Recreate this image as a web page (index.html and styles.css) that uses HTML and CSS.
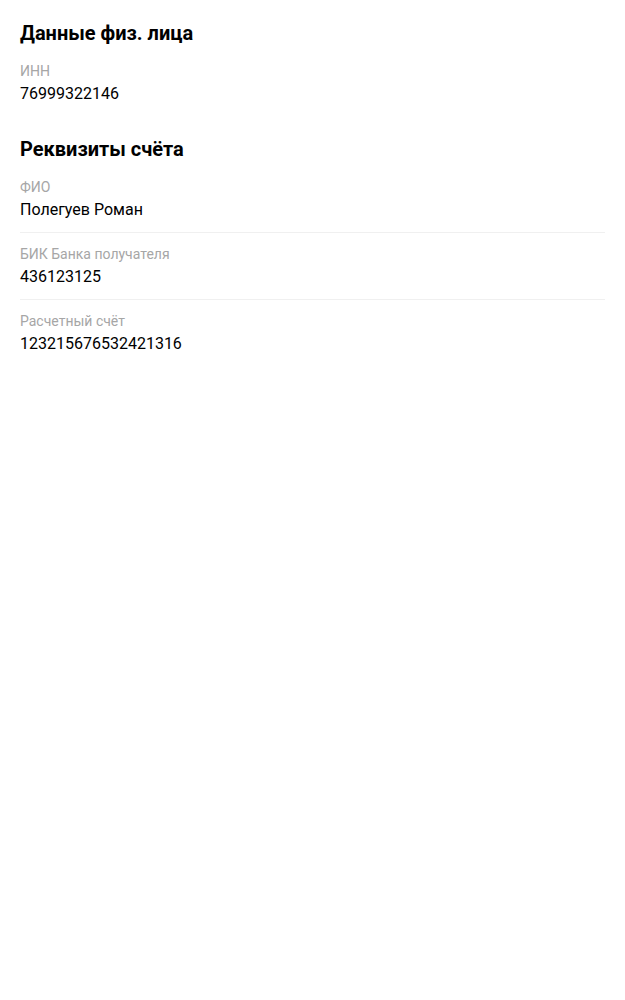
FILE: index.html
```html
<!DOCTYPE html>
<html lang="ru">
<head>
<meta charset="utf-8">
<link rel="stylesheet" href="styles.css">
</head>
<body>
<div class="page">
  <section class="section">
    <h2 class="title">Данные физ. лица</h2>
    <div class="list">
      <div class="item">
        <div class="label">ИНН</div>
        <div class="value">76999322146</div>
      </div>
    </div>
  </section>
  <section class="section">
    <h2 class="title">Реквизиты счёта</h2>
    <div class="list">
      <div class="item">
        <div class="label">ФИО</div>
        <div class="value">Полегуев Роман</div>
      </div>
      <div class="item">
        <div class="label">БИК Банка получателя</div>
        <div class="value">436123125</div>
      </div>
      <div class="item">
        <div class="label">Расчетный счёт</div>
        <div class="value">123215676532421316</div>
      </div>
    </div>
  </section>
</div>
</body>
</html>
```

FILE: styles.css
```css
html, body {
  margin: 0;
  padding: 0;
  background: #fff;
}
body {
  font-family: Roboto, "Noto Sans", sans-serif;
  color: #000;
}
.page {
  padding: 21px 20px;
  display: flex;
  flex-direction: column;
  gap: 21px;
}
.title {
  margin: 0 0 5px;
  font-size: 20px;
  line-height: 24px;
  font-weight: 700;
}
.list {
  display: flex;
  flex-direction: column;
}
.item {
  padding: 11px 0;
  border-bottom: 1px solid #f0f0f0;
}
.item:last-child {
  border-bottom: none;
}
.label {
  font-size: 14px;
  line-height: 20px;
  color: #a6a6a6;
}
.value {
  padding-top: 2px;
  font-size: 16px;
  line-height: 22px;
  color: #000;
}
```
